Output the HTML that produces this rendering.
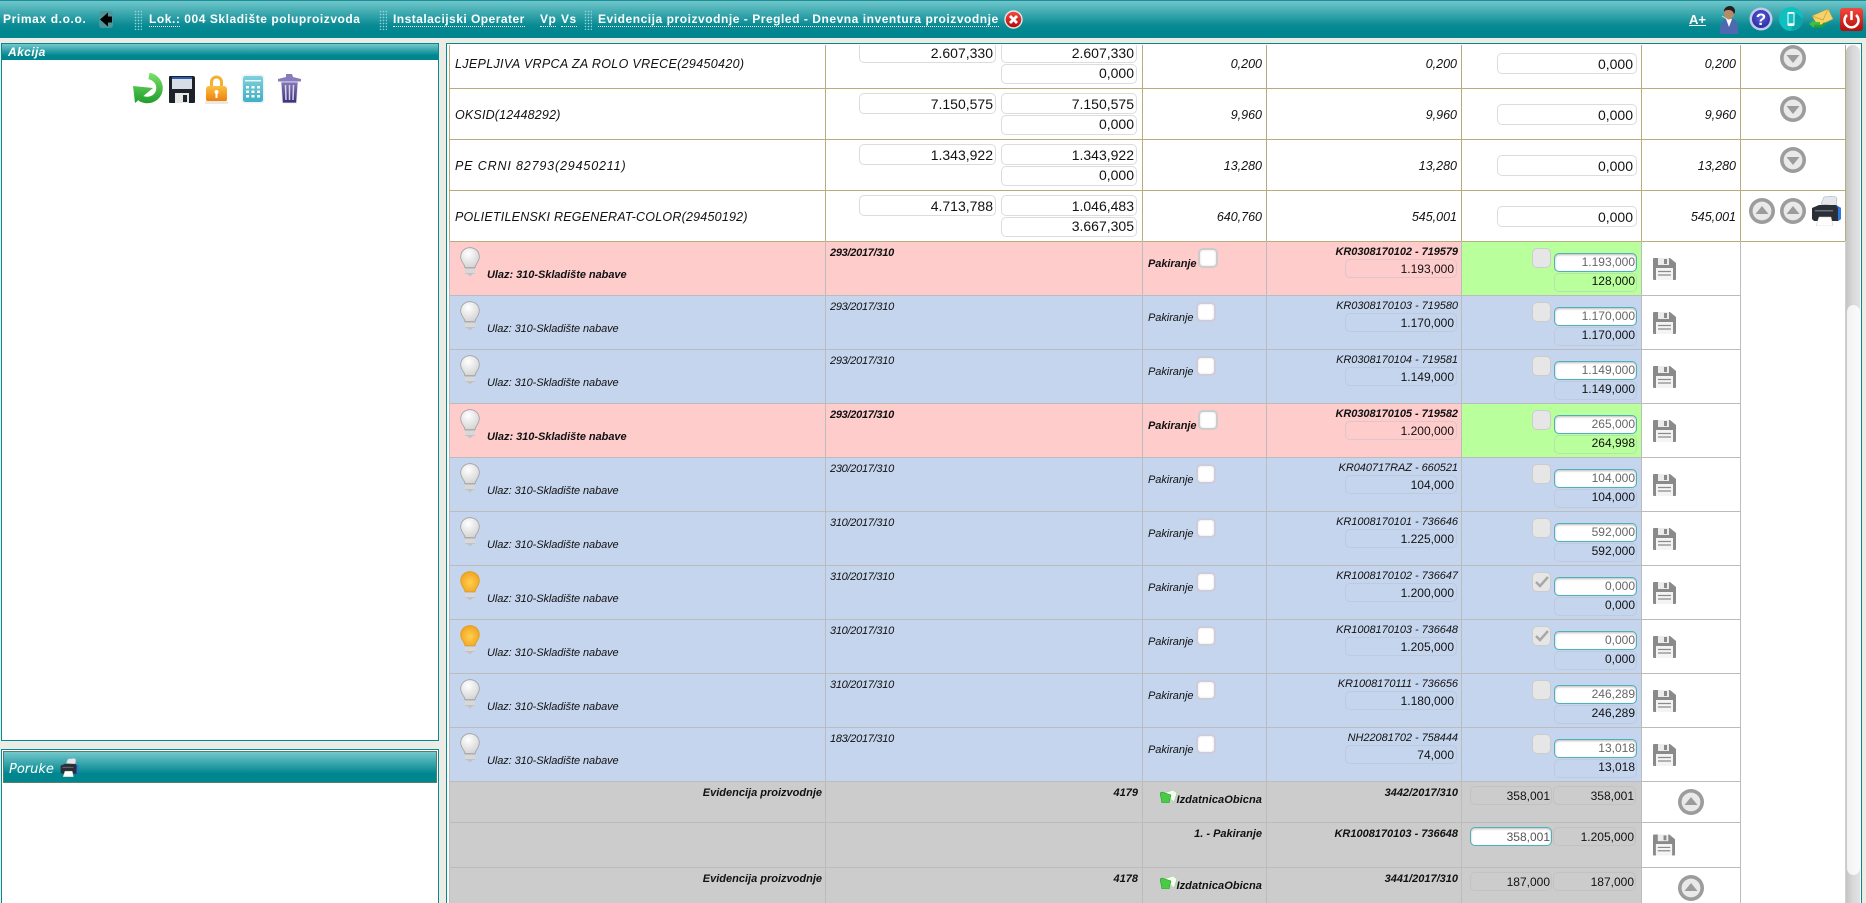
<!DOCTYPE html>
<html><head><meta charset="utf-8"><title>Primax</title>
<style>
html,body{margin:0;padding:0;width:1866px;height:903px;overflow:hidden;background:#ecece4;font-family:"Liberation Sans",sans-serif;}
div,span,svg{box-sizing:border-box}
#w{position:absolute;left:0;top:0;width:1866px;height:903px;overflow:hidden}
.x{position:absolute}
#hd{position:absolute;left:0;top:0;width:1866px;height:38px;border-top:1px solid #1a8f97;background:linear-gradient(#6fc6ca 0,#0b8b94 24px,#00868f 30px)}
.h{position:absolute;top:12px;font:bold 12px/15px "Liberation Sans",sans-serif;color:#fff;letter-spacing:.55px;white-space:nowrap}
.du{border-bottom:1px dotted #fff;display:inline-block;line-height:13px}
.grip{position:absolute;top:10px;width:8px;height:20px;background-image:radial-gradient(#93d3d7 32%,transparent 42%);background-size:3px 3px}
.tt{position:absolute;background:linear-gradient(#74c8cc 0,#00868f 72%)}
.v{position:absolute;width:1px;top:45px}
.r{position:absolute;left:0;width:1741px;height:54px}
.r>*{position:absolute;white-space:nowrap}
.b{left:449px;width:1192px;height:54px;top:0}
.l{left:449px;width:1292px;height:1px;top:0;background:#bcbcbc}
.red .b{background:#ffcccc}.blu .b{background:#c5d5ee}
.grn{left:1462px;width:179px;height:53px;top:1px;background:#b9ff9b}
.bulb{left:460px;top:6px;width:20px;height:30px}
.it{font:italic 11px/14px "Liberation Sans",sans-serif;color:#111}
.u{left:487px;top:27px;letter-spacing:-.09px}
.fb.u{letter-spacing:-.04px}
.d{left:830px;top:5px;letter-spacing:-.28px}
.p{left:1148px;top:16px;letter-spacing:-.05px}
.k{right:283px;top:4px;text-align:right;letter-spacing:-.05px}
.fb{font-weight:bold}
.cb{left:1196px;top:7px;width:20px;height:20px;border:2px solid #ccd;border-radius:5px;background:#fff;box-shadow:inset 0 0 2px #ddd}
.red .cb{left:1198px;border-color:#ccc}
.g{left:1532px;top:7px;width:19px;height:20px;border:1px solid #ccc;border-radius:5px;background:#e6e6e6}
.f{font:12px/18px "Liberation Sans",sans-serif;color:#111;text-align:right;padding-right:2px;border:1px solid rgba(180,190,205,.45);border-radius:5px;height:19px}
.q{left:1345px;width:112px;top:18px}
.a{left:1554px;width:83px;top:12px;background:#fff;border:1px solid #4fb0b8;color:#666;box-shadow:inset 0 1px 2px #bbb;line-height:17px;padding-right:1px}
.n{left:1554px;width:83px;top:32px;line-height:14px;height:19px;padding-right:1px}
.s{left:1653px;top:17px;width:23px;height:22px}
.t{position:absolute;border:1px solid #dcdcdc;border-radius:5px;background:#fff;font:14px/21px "Liberation Sans",sans-serif;color:#111;text-align:right;padding-right:2px;white-space:nowrap;height:21px}
.t2{line-height:16px;height:20px}
.t3{line-height:20px;padding-right:3px}
.nm{position:absolute;left:455px;font:italic 12.5px/16px "Liberation Sans",sans-serif;color:#111;white-space:nowrap}
.m{position:absolute;font:italic 12.5px/16px "Liberation Sans",sans-serif;color:#111;text-align:right;white-space:nowrap}
.gb{position:absolute;font:italic bold 11px/14px "Liberation Sans",sans-serif;color:#111;white-space:nowrap;text-align:right}
.w{position:absolute;font:12px/19px "Liberation Sans",sans-serif;color:#111;text-align:right;padding-right:1px;border:1px solid #c2c2c2;border-radius:5px;height:19px;white-space:nowrap}
svg.i{position:absolute;overflow:visible}
</style></head><body><div id="w">
<svg width="0" height="0" style="position:absolute">
<defs>
<radialGradient id="gw" cx=".4" cy=".3" r=".8"><stop offset="0" stop-color="#fff"/><stop offset="1" stop-color="#cfcfcf"/></radialGradient>
<radialGradient id="go" cx=".5" cy=".55" r=".7"><stop offset="0" stop-color="#ffcf50"/><stop offset="1" stop-color="#ee9a12"/></radialGradient>
<linearGradient id="gg" gradientUnits="userSpaceOnUse" x1="0" y1="0" x2="0" y2="30"><stop offset="0" stop-color="#7be06a"/><stop offset="1" stop-color="#1f9e2c"/></linearGradient>
<linearGradient id="gl" x1="0" y1="0" x2="0" y2="1"><stop offset="0" stop-color="#fbc040"/><stop offset="1" stop-color="#ee7c08"/></linearGradient>
<linearGradient id="gc" x1="0" y1="0" x2="0" y2="1"><stop offset="0" stop-color="#7fd0dc"/><stop offset="1" stop-color="#3fb0c6"/></linearGradient>
<linearGradient id="gt" x1="0" y1="0" x2="0" y2="1"><stop offset="0" stop-color="#8678b8"/><stop offset="1" stop-color="#3a2f78"/></linearGradient>
<linearGradient id="gp" x1="0" y1="0" x2="0" y2="1"><stop offset="0" stop-color="#f04a40"/><stop offset="1" stop-color="#b50c0c"/></linearGradient>
<radialGradient id="gh" cx=".5" cy=".4" r=".6"><stop offset="0" stop-color="#5a60dc"/><stop offset="1" stop-color="#2c2ea0"/></radialGradient>
<symbol id="bw" viewBox="0 0 20 30"><path d="M10 .7C4.500 .7.700 4.700.700 9.800c0 4.200 2.700 6.400 4 9.400v1.300h10.600v-1.300c1.300-3 4-5.200 4-9.400C19.300 4.700 15.500.700 10 .700z" fill="url(#gw)" stroke="#a0a0a0" stroke-width=".8"/><path d="M5 21h10v5.500l-3 1-2 2-2-2-3-1z" fill="#c2c2c2"/><path d="M5 23h10M5 25h10" stroke="#eee"/></symbol>
<symbol id="bo" viewBox="0 0 20 30"><path d="M10 .7C4.500 .7.700 4.700.700 9.800c0 4.200 2.700 6.400 4 9.400v1.300h10.600v-1.300c1.300-3 4-5.200 4-9.400C19.300 4.700 15.500.700 10 .700z" fill="url(#go)" stroke="#e09a20" stroke-width=".8"/><path d="M5 21h10v5.500l-3 1-2 2-2-2-3-1z" fill="#c2c2c2"/><path d="M5 23h10M5 25h10" stroke="#eee"/></symbol>
<symbol id="fl" viewBox="0 0 23 22"><path d="M0 1a1 1 0 0 1 1-1h16l6 5v16a1 1 0 0 1-1 1H1a1 1 0 0 1-1-1z" fill="#8a8a8a"/><path d="M5 0h11v7H5z" fill="#ececec"/><path d="M11 1h3v5h-3z" fill="#8a8a8a"/><path d="M3 10h17v12H3z" fill="#f4f4f4"/><path d="M5 13.500h13M5 17h13" stroke="#8a8a8a" stroke-width="1.200"/></symbol>
<symbol id="dn" viewBox="0 0 26 26"><circle cx="13" cy="13" r="13" fill="#9c9c9c"/><circle cx="13" cy="13" r="9.400" fill="#e9e9e9"/><path d="M6.500 10h13L13 18z" fill="#9c9c9c"/></symbol>
<symbol id="up" viewBox="0 0 26 26"><circle cx="13" cy="13" r="13" fill="#9c9c9c"/><circle cx="13" cy="13" r="9.400" fill="#e9e9e9"/><path d="M6.500 16h13L13 8z" fill="#9c9c9c"/></symbol>
<symbol id="pr" viewBox="0 0 31 30"><path d="M10 8l3-7 10-1 3 2-1 8z" fill="#e4e7ec" stroke="#a0a4aa" stroke-width=".5"/><path d="M1 12l7-3h17l5 3v11l-3 2H3l-2-2z" fill="#2b2f36"/><path d="M25 9l5 3v11l-3 2V12z" fill="#2a78e0"/><path d="M4 14h18v1.500H4z" fill="#6a6f78"/><path d="M8 21h12l2 9H5z" fill="#fff" stroke="#c8c8c8" stroke-width=".5"/></symbol>
<symbol id="fo" viewBox="0 0 17 13"><path d="M4 3L13 0l4 3-3 9z" fill="#f4fbee" stroke="#8ccf78" stroke-width=".5"/><path d="M0 3l2-1 9 3-2 8-7 0z" fill="#48cc44" stroke="#1c8a28" stroke-width=".5"/></symbol>
</defs></svg>

<!-- left panels -->
<div class="x" style="left:1px;top:43px;width:438px;height:698px;background:#fff;border:1px solid #008b94"></div>
<div class="tt" style="left:2px;top:44px;width:436px;height:16px"></div>
<div class="x" style="left:8px;top:45px;font:italic bold 12px/15px 'Liberation Sans',sans-serif;color:#fff;letter-spacing:.4px">Akcija</div>

<svg class="i" style="left:132px;top:73px" width="31" height="30" viewBox="0 0 31 30"><path d="M17 3c6 1 10.500 6 10.500 12 0 8-6.500 12-12.500 12-3 0-5-1-7-2" fill="none" stroke="url(#gg)" stroke-width="6.500"/><path d="M1 13l20 2-18 15z" fill="url(#gg)"/></svg>
<svg class="i" style="left:169px;top:76px" width="26" height="27" viewBox="0 0 26 27"><path d="M0 1a1 1 0 0 1 1-1h23a2 2 0 0 1 2 2v24a1 1 0 0 1-1 1H1a1 1 0 0 1-1-1z" fill="#1d2128"/><path d="M3 1h20v2H3z" fill="#2a5bb0"/><path d="M3 3h20v10H3z" fill="#d7dde6"/><path d="M6 17h14v10H6z" fill="#e6e6e6"/><path d="M14 19h4v7h-4z" fill="#1d2128"/></svg>
<svg class="i" style="left:205px;top:74px" width="23" height="30" viewBox="0 0 23 30"><path d="M5 13V8a6.500 6.500 0 0 1 13 0v5h-3V8a3.500 3.500 0 0 0-7 0v5z" fill="#f5b030"/><rect x="1" y="12" width="21" height="16" rx="3" fill="url(#gl)"/><circle cx="11.500" cy="18" r="2" fill="#fff"/><path d="M10.500 18h2v6h-2z" fill="#fff"/><rect x="0" y="27" width="23" height="3" rx="1.500" fill="#e8e8e8"/></svg>
<svg class="i" style="left:241px;top:74px" width="24" height="30" viewBox="0 0 24 30"><rect x=".5" y=".5" width="23" height="29" rx="3" fill="#eef2f4"/><rect x="2" y="2" width="20" height="26" rx="2.500" fill="url(#gc)"/><rect x="4" y="6" width="16" height="1.500" fill="#e8f7fa"/><path d="M5 12h3v2.500H5zM10.500 12h3v2.500h-3zM16 12h3v2.500h-3zM5 16.500h3V19H5zM10.500 16.500h3V19h-3zM16 16.500h3V19h-3zM5 21h3v2.500H5zM10.500 21h3v2.500h-3zM16 21h3v2.500h-3z" fill="#fff"/></svg>
<svg class="i" style="left:277px;top:73px" width="25" height="31" viewBox="0 0 25 31"><path d="M1 6l8-2V1h6l1 3 8 2v2.500H1z" fill="#8a7cbc"/><path d="M4 9h17l-1.500 21h-14z" fill="url(#gt)" stroke="#e8e8f0" stroke-width=".8"/><path d="M8.500 12l.5 15M12.500 12v15M16.500 12l-.5 15" stroke="#d8d4ea" stroke-width="1.500"/></svg>

<div class="x" style="left:1px;top:749px;width:438px;height:154px;background:#fff;border:1px solid #008b94;border-bottom:0"></div>
<div class="tt" style="left:3px;top:751px;width:434px;height:32px;border:1px solid #55806a"></div>
<div class="x" style="left:9px;top:762px;font:italic 13px/15px 'DejaVu Sans',sans-serif;color:#fff;">Poruke</div>
<svg class="i" style="left:60px;top:758px" width="19" height="19"><use href="#pr" width="19" height="19"/></svg>

<!-- right panel -->
<div class="x" style="left:446px;top:43px;width:1416px;height:860px;background:#fff;border:1px solid #008b94;border-bottom:0"></div>

<!-- top rows -->
<div class="x" style="left:449px;top:88px;width:1397px;height:1px;background:#b8ab7e"></div>
<div class="x" style="left:449px;top:139px;width:1397px;height:1px;background:#b8ab7e"></div>
<div class="x" style="left:449px;top:190px;width:1397px;height:1px;background:#b8ab7e"></div>

<div class="nm" style="top:56px;letter-spacing:.33px">LJEPLJIVA VRPCA ZA ROLO VRECE(29450420)</div>
<div class="t" style="left:859px;top:42px;width:137px">2.607,330</div>
<div class="t" style="left:1001px;top:42px;width:136px">2.607,330</div>
<div class="t t2" style="left:1001px;top:64px;width:136px">0,000</div>
<div class="m" style="left:1162px;top:56px;width:100px">0,200</div>
<div class="m" style="left:1357px;top:56px;width:100px">0,200</div>
<div class="t t3" style="left:1497px;top:53px;width:140px">0,000</div>
<div class="m" style="left:1636px;top:56px;width:100px">0,200</div>
<svg class="i" style="left:1780px;top:45px" width="26" height="26"><use href="#dn" width="26" height="26"/></svg>

<div class="nm" style="top:107px;letter-spacing:.18px">OKSID(12448292)</div>
<div class="t" style="left:859px;top:93px;width:137px">7.150,575</div>
<div class="t" style="left:1001px;top:93px;width:136px">7.150,575</div>
<div class="t t2" style="left:1001px;top:115px;width:136px">0,000</div>
<div class="m" style="left:1162px;top:107px;width:100px">9,960</div>
<div class="m" style="left:1357px;top:107px;width:100px">9,960</div>
<div class="t t3" style="left:1497px;top:104px;width:140px">0,000</div>
<div class="m" style="left:1636px;top:107px;width:100px">9,960</div>
<svg class="i" style="left:1780px;top:96px" width="26" height="26"><use href="#dn" width="26" height="26"/></svg>

<div class="nm" style="top:158px;letter-spacing:.85px">PE CRNI 82793(29450211)</div>
<div class="t" style="left:859px;top:144px;width:137px">1.343,922</div>
<div class="t" style="left:1001px;top:144px;width:136px">1.343,922</div>
<div class="t t2" style="left:1001px;top:166px;width:136px">0,000</div>
<div class="m" style="left:1162px;top:158px;width:100px">13,280</div>
<div class="m" style="left:1357px;top:158px;width:100px">13,280</div>
<div class="t t3" style="left:1497px;top:155px;width:140px">0,000</div>
<div class="m" style="left:1636px;top:158px;width:100px">13,280</div>
<svg class="i" style="left:1780px;top:147px" width="26" height="26"><use href="#dn" width="26" height="26"/></svg>

<div class="nm" style="top:209px;letter-spacing:.22px">POLIETILENSKI REGENERAT-COLOR(29450192)</div>
<div class="t" style="left:859px;top:195px;width:137px">4.713,788</div>
<div class="t" style="left:1001px;top:195px;width:136px">1.046,483</div>
<div class="t t2" style="left:1001px;top:217px;width:136px">3.667,305</div>
<div class="m" style="left:1162px;top:209px;width:100px">640,760</div>
<div class="m" style="left:1357px;top:209px;width:100px">545,001</div>
<div class="t t3" style="left:1497px;top:206px;width:140px">0,000</div>
<div class="m" style="left:1636px;top:209px;width:100px">545,001</div>
<svg class="i" style="left:1749px;top:198px" width="26" height="26"><use href="#up" width="26" height="26"/></svg>
<svg class="i" style="left:1780px;top:198px" width="26" height="26"><use href="#up" width="26" height="26"/></svg>
<svg class="i" style="left:1811px;top:196px" width="31" height="30"><use href="#pr" width="31" height="30"/></svg>

<!-- item rows -->
<div class="r red" style="top:241px"><div class="b"></div><div class="grn"></div><div class="l" style="background:#b8ab7e"></div><svg class="bulb"><use href="#bw"/></svg><div class="it fb u">Ulaz: 310-Skladište nabave</div><div class="it fb d">293/2017/310</div><div class="it fb p">Pakiranje</div><div class="cb"></div><div class="it fb k">KR0308170102 - 719579</div><div class="f q">1.193,000</div><div class="g"></div><div class="f a">1.193,000</div><div class="f n">128,000</div><svg class="s"><use href="#fl"/></svg></div>
<div class="r blu" style="top:295px"><div class="b"></div><div class="l"></div><svg class="bulb"><use href="#bw"/></svg><div class="it u">Ulaz: 310-Skladište nabave</div><div class="it d">293/2017/310</div><div class="it p">Pakiranje</div><div class="cb"></div><div class="it k">KR0308170103 - 719580</div><div class="f q">1.170,000</div><div class="g"></div><div class="f a">1.170,000</div><div class="f n">1.170,000</div><svg class="s"><use href="#fl"/></svg></div>
<div class="r blu" style="top:349px"><div class="b"></div><div class="l"></div><svg class="bulb"><use href="#bw"/></svg><div class="it u">Ulaz: 310-Skladište nabave</div><div class="it d">293/2017/310</div><div class="it p">Pakiranje</div><div class="cb"></div><div class="it k">KR0308170104 - 719581</div><div class="f q">1.149,000</div><div class="g"></div><div class="f a">1.149,000</div><div class="f n">1.149,000</div><svg class="s"><use href="#fl"/></svg></div>
<div class="r red" style="top:403px"><div class="b"></div><div class="grn"></div><div class="l"></div><svg class="bulb"><use href="#bw"/></svg><div class="it fb u">Ulaz: 310-Skladište nabave</div><div class="it fb d">293/2017/310</div><div class="it fb p">Pakiranje</div><div class="cb"></div><div class="it fb k">KR0308170105 - 719582</div><div class="f q">1.200,000</div><div class="g"></div><div class="f a">265,000</div><div class="f n">264,998</div><svg class="s"><use href="#fl"/></svg></div>
<div class="r blu" style="top:457px"><div class="b"></div><div class="l"></div><svg class="bulb"><use href="#bw"/></svg><div class="it u">Ulaz: 310-Skladište nabave</div><div class="it d">230/2017/310</div><div class="it p">Pakiranje</div><div class="cb"></div><div class="it k">KR040717RAZ - 660521</div><div class="f q">104,000</div><div class="g"></div><div class="f a">104,000</div><div class="f n">104,000</div><svg class="s"><use href="#fl"/></svg></div>
<div class="r blu" style="top:511px"><div class="b"></div><div class="l"></div><svg class="bulb"><use href="#bw"/></svg><div class="it u">Ulaz: 310-Skladište nabave</div><div class="it d">310/2017/310</div><div class="it p">Pakiranje</div><div class="cb"></div><div class="it k">KR1008170101 - 736646</div><div class="f q">1.225,000</div><div class="g"></div><div class="f a">592,000</div><div class="f n">592,000</div><svg class="s"><use href="#fl"/></svg></div>
<div class="r blu" style="top:565px"><div class="b"></div><div class="l"></div><svg class="bulb"><use href="#bo"/></svg><div class="it u">Ulaz: 310-Skladište nabave</div><div class="it d">310/2017/310</div><div class="it p">Pakiranje</div><div class="cb"></div><div class="it k">KR1008170102 - 736647</div><div class="f q">1.200,000</div><div class="g"><svg width="17" height="18" style="position:absolute;left:0;top:0"><path d="M3 9l4 4 8-9" fill="none" stroke="#a8a8a8" stroke-width="2.500"/></svg></div><div class="f a">0,000</div><div class="f n">0,000</div><svg class="s"><use href="#fl"/></svg></div>
<div class="r blu" style="top:619px"><div class="b"></div><div class="l"></div><svg class="bulb"><use href="#bo"/></svg><div class="it u">Ulaz: 310-Skladište nabave</div><div class="it d">310/2017/310</div><div class="it p">Pakiranje</div><div class="cb"></div><div class="it k">KR1008170103 - 736648</div><div class="f q">1.205,000</div><div class="g"><svg width="17" height="18" style="position:absolute;left:0;top:0"><path d="M3 9l4 4 8-9" fill="none" stroke="#a8a8a8" stroke-width="2.500"/></svg></div><div class="f a">0,000</div><div class="f n">0,000</div><svg class="s"><use href="#fl"/></svg></div>
<div class="r blu" style="top:673px"><div class="b"></div><div class="l"></div><svg class="bulb"><use href="#bw"/></svg><div class="it u">Ulaz: 310-Skladište nabave</div><div class="it d">310/2017/310</div><div class="it p">Pakiranje</div><div class="cb"></div><div class="it k">KR1008170111 - 736656</div><div class="f q">1.180,000</div><div class="g"></div><div class="f a">246,289</div><div class="f n">246,289</div><svg class="s"><use href="#fl"/></svg></div>
<div class="r blu" style="top:727px"><div class="b"></div><div class="l"></div><svg class="bulb"><use href="#bw"/></svg><div class="it u">Ulaz: 310-Skladište nabave</div><div class="it d">183/2017/310</div><div class="it p">Pakiranje</div><div class="cb"></div><div class="it k">NH22081702 - 758444</div><div class="f q">74,000</div><div class="g"></div><div class="f a">13,018</div><div class="f n">13,018</div><svg class="s"><use href="#fl"/></svg></div>

<!-- grey rows -->
<div class="x" style="left:449px;top:781px;width:1192px;height:122px;background:#cccccc"></div>
<div class="x" style="left:449px;top:781px;width:1292px;height:1px;background:#bcbcbc"></div>
<div class="x" style="left:449px;top:822px;width:1292px;height:1px;background:#bcbcbc"></div>
<div class="x" style="left:449px;top:867px;width:1292px;height:1px;background:#bcbcbc"></div>

<div class="gb" style="left:622px;top:786px;width:200px">Evidencija proizvodnje</div>
<div class="gb" style="left:1038px;top:786px;width:100px">4179</div>
<svg class="i" style="left:1160px;top:790px" width="17" height="13"><use href="#fo" width="17" height="13"/></svg>
<div class="gb" style="left:1162px;top:793px;width:100px;letter-spacing:.08px">IzdatnicaObicna</div>
<div class="gb" style="left:1308px;top:786px;width:150px">3442/2017/310</div>
<div class="w" style="left:1470px;top:786px;width:82px">358,001</div>
<div class="w" style="left:1553px;top:786px;width:83px">358,001</div>
<svg class="i" style="left:1678px;top:789px" width="26" height="26"><use href="#up" width="26" height="26"/></svg>

<div class="gb" style="left:1112px;top:827px;width:150px">1. - Pakiranje</div>
<div class="gb" style="left:1308px;top:827px;width:150px">KR1008170103 - 736648</div>
<div class="w" style="left:1470px;top:827px;width:82px;background:#fff;border-color:#4fb0b8;color:#555;box-shadow:inset 0 1px 2px #bbb">358,001</div>
<div class="w" style="left:1553px;top:827px;width:83px">1.205,000</div>
<svg class="i" style="left:1653px;top:834px" width="22" height="22"><use href="#fl" width="22" height="22"/></svg>

<div class="gb" style="left:622px;top:872px;width:200px">Evidencija proizvodnje</div>
<div class="gb" style="left:1038px;top:872px;width:100px">4178</div>
<svg class="i" style="left:1160px;top:876px" width="17" height="13"><use href="#fo" width="17" height="13"/></svg>
<div class="gb" style="left:1162px;top:879px;width:100px;letter-spacing:.08px">IzdatnicaObicna</div>
<div class="gb" style="left:1308px;top:872px;width:150px">3441/2017/310</div>
<div class="w" style="left:1470px;top:872px;width:82px">187,000</div>
<div class="w" style="left:1553px;top:872px;width:83px">187,000</div>
<svg class="i" style="left:1678px;top:875px" width="26" height="26"><use href="#up" width="26" height="26"/></svg>

<!-- vertical lines -->
<div class="v" style="left:449px;height:196px;background:#b8ab7e"></div>
<div class="v" style="left:825px;height:196px;background:#b8ab7e"></div>
<div class="v" style="left:1142px;height:196px;background:#b8ab7e"></div>
<div class="v" style="left:1266px;height:196px;background:#b8ab7e"></div>
<div class="v" style="left:1461px;height:196px;background:#b8ab7e"></div>
<div class="v" style="left:1641px;height:196px;background:#b8ab7e"></div>
<div class="v" style="left:1740px;height:196px;background:#b8ab7e"></div>
<div class="v" style="left:1845px;height:196px;background:#b8ab7e"></div>
<div class="v" style="left:449px;top:241px;height:662px;background:#bcbcbc"></div>
<div class="v" style="left:825px;top:241px;height:662px;background:#bcbcbc"></div>
<div class="v" style="left:1142px;top:241px;height:662px;background:#bcbcbc"></div>
<div class="v" style="left:1266px;top:241px;height:662px;background:#bcbcbc"></div>
<div class="v" style="left:1461px;top:241px;height:662px;background:#bcbcbc"></div>
<div class="v" style="left:1641px;top:241px;height:662px;background:#bcbcbc"></div>
<div class="v" style="left:1740px;top:241px;height:662px;background:#bcbcbc"></div>
<div class="x" style="left:1741px;top:241px;width:105px;height:1px;background:#b8ab7e"></div>
<div class="v" style="left:1845px;top:241px;height:662px;background:#d0d0d0"></div>

<!-- scrollbar -->
<div class="x" style="left:1846px;top:45px;width:14px;height:858px;background:linear-gradient(90deg,#c4c4c4,#d9d9d9 50%,#e2e2e2);border-radius:7px 7px 0 0"></div>
<div class="x" style="left:1846px;top:305px;width:14px;height:570px;background:linear-gradient(90deg,#f2f2f2,#fbfbfb);border-radius:7px;border-left:1px solid #c8c8c8"></div>

<!-- top cover -->
<div class="x" style="left:446px;top:38px;width:1420px;height:5px;background:#ecece4"></div>
<div class="x" style="left:446px;top:43px;width:1416px;height:1px;background:#008b94"></div>
<div class="x" style="left:447px;top:44px;width:1414px;height:1px;background:#fff"></div>

<!-- header -->
<div id="hd"></div>
<div class="h" style="left:3px;letter-spacing:.62px">Primax d.o.o.</div>
<svg class="i" style="left:99px;top:11px" width="14" height="17" viewBox="0 0 14 17"><rect width="14" height="17" rx="3" fill="#4a979c"/><path d="M1 8.500L9 1.500v4h4v6H9v4z" fill="#000"/></svg>
<div class="grip" style="left:134px"></div>
<div class="h" style="left:149px"><span class="du">Lok.:</span> 004 Skladište poluproizvoda</div>
<div class="grip" style="left:379px"></div>
<div class="h" style="left:393px;letter-spacing:.47px"><span class="du">Instalacijski Operater</span></div>
<div class="h" style="left:540px"><span class="du">Vp</span></div>
<div class="h" style="left:561px"><span class="du">Vs</span></div>
<div class="grip" style="left:584px"></div>
<div class="h" style="left:598px;letter-spacing:.54px"><span class="du">Evidencija proizvodnje - Pregled - Dnevna inventura proizvodnje</span></div>
<svg class="i" style="left:1004px;top:10px" width="19" height="19" viewBox="0 0 19 19"><circle cx="9.500" cy="9.500" r="9.200" fill="#e8e8e8"/><circle cx="9.500" cy="9.500" r="7.800" fill="url(#gp)"/><path d="M6 6l7 7M13 6l-7 7" stroke="#fff" stroke-width="2.800"/></svg>

<div class="h" style="left:1689px;letter-spacing:0;font-size:13px;text-decoration:underline">A+</div>
<svg class="i" style="left:1718px;top:5px" width="22" height="29" viewBox="0 0 22 29"><path d="M2 29c-1-9 2-13 6-15h7c4 2 6 6 5 15z" fill="#5068b0"/><path d="M8 14l3 8 3-8z" fill="#fff"/><ellipse cx="11" cy="8" rx="5" ry="6.500" fill="#b88a68"/><path d="M6 7c-1-6 9-9 11-2 0 2 0 3-1 4-1-3-3-4-5-4S7 5 6 7z" fill="#222"/><path d="M4 11l5 3" stroke="#ddd"/></svg>
<svg class="i" style="left:1749px;top:7px" width="24" height="24" viewBox="0 0 24 24"><circle cx="12" cy="12" r="11.500" fill="#c5c9ec"/><circle cx="12" cy="12" r="9" fill="url(#gh)"/><text x="12" y="18" text-anchor="middle" font-family="Liberation Sans" font-weight="bold" font-size="17" fill="#fff">?</text></svg>
<svg class="i" style="left:1779px;top:7px" width="24" height="24" viewBox="0 0 24 24"><circle cx="12" cy="12" r="12" fill="#0fc0c0"/><path d="M12 24a12 12 0 0 0 12-12l-7-6-4 14z" fill="#0aa6a8"/><rect x="8.500" y="5" width="7" height="14" rx="1.200" fill="#fff"/><rect x="9.500" y="6.800" width="5" height="9.500" fill="#0fc0c0"/></svg>
<svg class="i" style="left:1809px;top:8px" width="24" height="21" viewBox="0 0 24 21"><path d="M3 8L19 1l5 10-15 7z" fill="#f5d36a" stroke="#c9a030" stroke-width=".5"/><path d="M3 8l11 4 5-11" fill="none" stroke="#c9a030" stroke-width=".7"/><path d="M0 16l5-4v2h6v4H5v2z" fill="#3fc03f"/><path d="M5 18h8l3-3" fill="none" stroke="#2ea02e" stroke-width="2.500"/></svg>
<svg class="i" style="left:1840px;top:8px" width="23" height="23" viewBox="0 0 23 23"><rect width="23" height="23" rx="3" fill="url(#gp)"/><path d="M7 7a7 7 0 1 0 9 0" fill="none" stroke="#fff" stroke-width="2.500"/><path d="M11.500 3v9" stroke="#fff" stroke-width="2.500"/></svg>
</div></body></html>
